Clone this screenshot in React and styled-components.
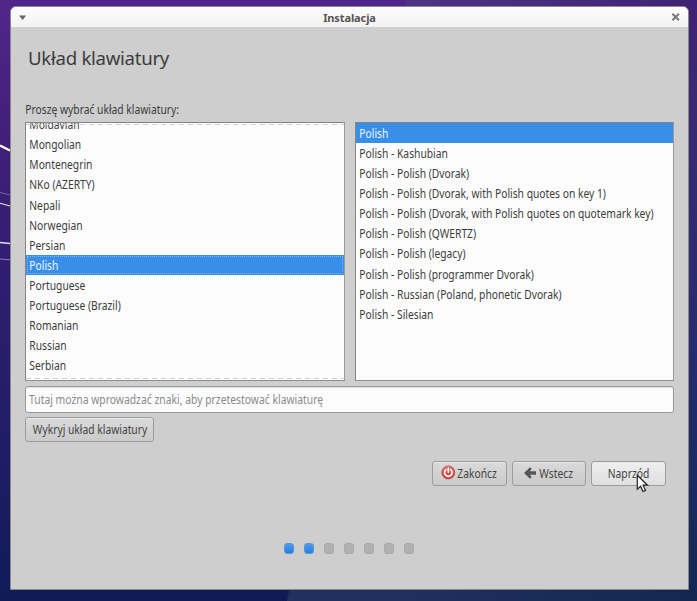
import React from 'react';
import styled, { createGlobalStyle } from 'styled-components';

const GlobalStyle = createGlobalStyle`
  * { box-sizing: border-box; }
  body { margin: 0; overflow: hidden; font-family: "Noto Sans", sans-serif; font-size: 12px; color: #3c3c3c; }
`;

const Desktop = styled.div`
  position: relative;
  width: 697px;
  height: 601px;
  padding: 6px 8px 11px 10px;
  background: linear-gradient(180deg, #51268a 0%, #43207b 20%, #2e1d70 48%, #1f1d66 75%, #101b56 100%);
`;

const Wallpaper = styled.svg`
  position: absolute;
  inset: 0;
`;

const Window = styled.main`
  position: relative;
  display: flex;
  flex-direction: column;
  width: 679px;
  height: 584px;
  border: 1px solid #888789;
  border-radius: 6px 6px 0 0;
  background: #cecece;
  overflow: hidden;
`;

const TitleBar = styled.header`
  display: flex;
  align-items: center;
  justify-content: space-between;
  flex: none;
  height: 20px;
  padding: 0 8px 0 7px;
  background: linear-gradient(#fdfdfd, #f3f2f1);
`;

const WindowTitle = styled.span`
  padding: 2px 0 0 1px;
  font-size: 11px;
  font-weight: 700;
  line-height: 20px;
  letter-spacing: -0.1px;
  color: #555;
`;

const Content = styled.div`
  display: flex;
  flex-direction: column;
  padding: 0 14px;
`;

const Heading = styled.h1`
  margin: 17px 0 0 3px;
  height: 28px;
  font: 400 18.67px/28px "Noto Sans", sans-serif;
  letter-spacing: -0.3px;
  white-space: nowrap;
`;

const Condensed = styled.span`
  display: inline-block;
  transform: translate(0.3px, 0.5px) scaleX(0.857);
  transform-origin: ${(p) => p.$origin || 'left'} center;
  white-space: nowrap;
`;

const Prompt = styled.label`
  margin-top: 28px;
  height: 22px;
  line-height: 17px;
`;

const Lists = styled.div`
  display: flex;
  gap: 10px;
`;

const ListBox = styled.div`
  position: relative;
  width: ${(p) => p.$width}px;
  height: 259px;
  border: 1px solid #858585;
  border-right-color: #9a9a9a;
  border-bottom-color: #8f8f8f;
  background: #fcfcfc;
  overflow: hidden;
`;

const Rows = styled.div`
  margin-top: ${(p) => p.$offset}px;
`;

const Row = styled.div`
  height: 20.08px;
  padding-left: 3px;
  line-height: 20px;
  white-space: nowrap;
  color: ${(p) => (p.$selected ? '#eef6ff' : '#3c3c3c')};
  background: ${(p) => (p.$selected ? '#398ee7' : 'transparent')};
  outline: ${(p) => (p.$focused ? '1px dotted #7ab5f2' : 'none')};
  outline-offset: -2px;
`;

const ScrollEdge = styled.div`
  position: absolute;
  left: 0;
  right: 0;
  ${(p) => (p.$bottom ? 'bottom: 1px' : 'top: 1px')};
  height: 1px;
  background: repeating-linear-gradient(90deg, #cfcfcf 0 5px, transparent 5px 9px);
`;

const Field = styled.div`
  height: 27px;
  margin-top: 5px;
  padding: 0 3px;
  border: 1px solid #999;
  border-radius: 3px;
  background: #fcfcfc;
  box-shadow: inset 0 1px 1px #dedede;
  overflow: hidden;
`;

const TestInput = styled.input`
  display: block;
  width: 115%;
  height: 23px;
  padding: 0;
  border: 0;
  outline: none;
  background: transparent;
  font: 12px "Noto Sans", sans-serif;
  transform: translateY(0.5px) scaleX(0.863);
  transform-origin: left center;
  &::placeholder { color: #8b8b8b; opacity: 1; }
`;

const Button = styled.button`
  display: flex;
  align-items: center;
  justify-content: ${(p) => (p.$inset ? 'flex-start' : 'center')};
  flex: none;
  gap: ${(p) => p.$gap || 0}px;
  width: ${(p) => p.$width}px;
  height: 25px;
  padding: 0 0 1px ${(p) => p.$inset || 0}px;
  border: 1px solid #9c9c9c;
  border-radius: 3px;
  background: ${(p) => (p.$hover ? 'linear-gradient(#efefef, #dfdfdf)' : 'linear-gradient(#dadada, #cacaca)')};
  box-shadow: inset 0 1px #e8e8e8;
  font: 12px/20px "Noto Sans", sans-serif;
  color: #444;
  white-space: nowrap;
`;

const DetectRow = styled.div`
  display: flex;
  margin-top: 4.4px;
`;

const Actions = styled.div`
  display: flex;
  justify-content: flex-end;
  gap: 5px;
  margin: 18.6px 8px 0 0;
`;

const Steps = styled.div`
  display: flex;
  gap: 10px;
  margin: 57px 0 0 259px;
`;

const Step = styled.span`
  width: 10px;
  height: 11px;
  border: 1px solid ${(p) => (p.$done ? '#5b97d5' : '#a8a8a8')};
  border-radius: 3px;
  background: ${(p) => (p.$done ? 'linear-gradient(#4b9bef, #2580dc)' : '#b1b1b1')};
`;

const Pointer = styled.svg`
  position: absolute;
  left: 636px;
  top: 474px;
`;

const languages = [
  'Moldavian', 'Mongolian', 'Montenegrin', 'NKo (AZERTY)', 'Nepali', 'Norwegian', 'Persian',
  'Polish', 'Portuguese', 'Portuguese (Brazil)', 'Romanian', 'Russian', 'Serbian',
];

const variants = [
  'Polish', 'Polish - Kashubian', 'Polish - Polish (Dvorak)',
  'Polish - Polish (Dvorak, with Polish quotes on key 1)',
  'Polish - Polish (Dvorak, with Polish quotes on quotemark key)',
  'Polish - Polish (QWERTZ)', 'Polish - Polish (legacy)', 'Polish - Polish (programmer Dvorak)',
  'Polish - Russian (Poland, phonetic Dvorak)', 'Polish - Silesian',
];

const MenuIcon = () => (
  <svg width="9" height="7" viewBox="0 0 9 7"><path d="M1.1 1.4h7L4.6 6z" fill="#646464" /></svg>
);

const CloseIcon = () => (
  <svg width="9" height="8" viewBox="0 0 9 8">
    <path d="M1.4.8 8 7.2M8 .8 1.4 7.2" stroke="#7b7b7b" strokeWidth="2.1" />
  </svg>
);

const QuitIcon = () => (
  <svg width="15" height="15" viewBox="0 0 15 15">
    <defs>
      <linearGradient id="quit" x2="0" y2="1">
        <stop stopColor="#e77470" /><stop offset="1" stopColor="#c92c2e" />
      </linearGradient>
    </defs>
    <circle cx="7.3" cy="7.5" r="6.5" fill="url(#quit)" stroke="#c05a59" />
    <path d="M4.9 4.6a3.8 3.8 0 1 0 4.8 0M7.3 3v4.3" fill="none" stroke="#fff" strokeWidth="1.6" strokeLinecap="round" />
  </svg>
);

const BackIcon = () => (
  <svg width="12" height="12" viewBox="0 0 12 12">
    <path d="M0 6 6 .2 7.8 1.9 5.7 4.2H12v3.6H5.7l2.1 2.3L6 11.8z" fill="#555" />
  </svg>
);

export default function App() {
  return (
    <Desktop>
      <GlobalStyle />
      <Wallpaper width="697" height="601" viewBox="0 0 697 601">
        <defs>
          <linearGradient id="beam" x2="0" y2="1">
            <stop stopColor="#503486" /><stop offset=".25" stopColor="#3c2b77" />
            <stop offset=".65" stopColor="#26296b" /><stop offset="1" stopColor="#20305f" />
          </linearGradient>
          <linearGradient id="side" x2="0" y2="1">
            <stop stopColor="#402273" /><stop offset=".2" stopColor="#392a76" />
            <stop offset=".55" stopColor="#282b70" /><stop offset=".82" stopColor="#1b2a60" />
            <stop offset="1" stopColor="#142750" />
          </linearGradient>
          <linearGradient id="fade">
            <stop stopColor="#fff" stopOpacity="0" /><stop offset="1" stopColor="#fff" />
          </linearGradient>
          <mask id="sideMask"><path d="M400 0H697V601H400z" fill="url(#fade)" /></mask>
        </defs>
        <path d="M406 0H697V601H287z" fill="url(#beam)" />
        <path d="M400 0H697V601H400z" fill="url(#side)" mask="url(#sideMask)" />
        <g fill="none" stroke="#fff">
          <path d="M0 145.5 10 150.5" strokeWidth="2.3" />
          <path d="M0 192.5 10 195" strokeWidth=".8" opacity=".4" />
          <path d="M0 203.2 10 206" strokeWidth="1.1" opacity=".9" />
          <path d="M0 242.5 10 243.5" strokeWidth="1.3" opacity=".85" />
          <path d="M0 259 10 259.8" strokeWidth=".8" opacity=".55" />
        </g>
      </Wallpaper>
      <Window>
        <TitleBar>
          <MenuIcon />
          <WindowTitle>Instalacja</WindowTitle>
          <CloseIcon />
        </TitleBar>
        <Content>
          <Heading>Układ klawiatury</Heading>
          <Prompt htmlFor="test"><Condensed>Proszę wybrać układ klawiatury:</Condensed></Prompt>
          <Lists>
            <ListBox $width={320}>
              <Rows $offset={-8.8}>
                {languages.map((name) => (
                  <Row key={name} $selected={name === 'Polish'} $focused={name === 'Polish'}>
                    <Condensed>{name}</Condensed>
                  </Row>
                ))}
              </Rows>
              <ScrollEdge />
              <ScrollEdge $bottom />
            </ListBox>
            <ListBox $width={319}>
              <Rows $offset={0}>
                {variants.map((name) => (
                  <Row key={name} $selected={name === 'Polish'}><Condensed>{name}</Condensed></Row>
                ))}
              </Rows>
            </ListBox>
          </Lists>
          <Field>
            <TestInput id="test" placeholder="Tutaj można wprowadzać znaki, aby przetestować klawiaturę" />
          </Field>
          <DetectRow>
            <Button $width={129}><Condensed $origin="center">Wykryj układ klawiatury</Condensed></Button>
          </DetectRow>
          <Actions>
            <Button $width={75} $gap={1} $inset={8}><QuitIcon /><Condensed>Zakończ</Condensed></Button>
            <Button $width={74} $gap={3} $inset={11}><BackIcon /><Condensed>Wstecz</Condensed></Button>
            <Button $width={75} $hover><Condensed $origin="center">Naprzód</Condensed></Button>
          </Actions>
          <Steps>
            {[1, 2, 3, 4, 5, 6, 7].map((step) => <Step key={step} $done={step <= 2} />)}
          </Steps>
        </Content>
      </Window>
      <Pointer width="13" height="20" viewBox="0 0 13 20">
        <path d="M1.3 1.2v14l3.3-3 2.4 5.3 2.5-1.1-2.4-5.2h4.4z" fill="#fff" stroke="#222" strokeWidth="1.2" />
      </Pointer>
    </Desktop>
  );
}
